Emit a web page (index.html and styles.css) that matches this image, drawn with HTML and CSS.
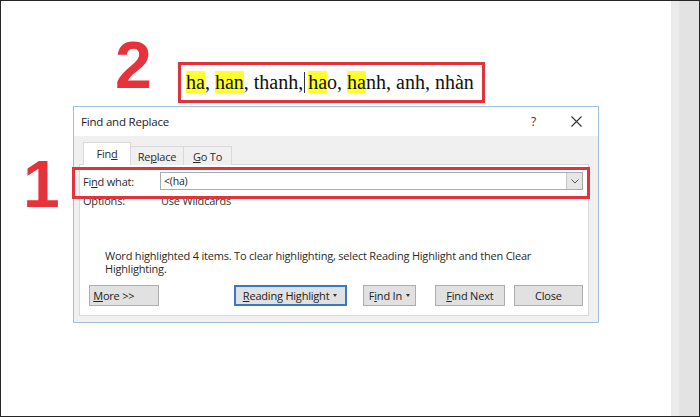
FILE: index.html
```html
<!DOCTYPE html>
<html>
<head>
<meta charset="utf-8">
<link rel="stylesheet" href="styles.css">
</head>
<body>
<div class="frame">
  <div class="page">
    <div class="doc-row">
      <div class="num num-2">2</div>
      <div class="doc-box">
        <span class="hl">ha</span>, <span class="hl">han</span>, thanh,<span class="caret"> </span><span class="hl">ha</span>o, <span class="hl">ha</span>nh, anh, nhàn
      </div>
    </div>

    <div class="dialog">
      <div class="titlebar">
        <span class="title">Find and Replace</span>
        <span class="help">?</span>
        <svg class="close-x" width="11" height="11" viewBox="0 0 11 11"><path d="M0.5 0.5 L10.5 10.5 M10.5 0.5 L0.5 10.5" stroke="#333" stroke-width="1.1" fill="none"/></svg>
      </div>
      <div class="body">
        <div class="tabs">
          <div class="tab active">Fin<u>d</u></div>
          <div class="tab">Re<u>p</u>lace</div>
          <div class="tab"><u>G</u>o To</div>
        </div>
        <div class="panel">
          <div class="find-row">
            <span class="label">Fi<u>n</u>d what:</span>
            <div class="input">
              <span class="input-text">&lt;(ha)</span>
              <span class="dd">
                <svg width="8" height="5" viewBox="0 0 8 5"><path d="M0.5 0.5 L4 4 L7.5 0.5" stroke="#555" stroke-width="1" fill="none"/></svg>
              </span>
            </div>
          </div>
          <div class="options-row">
            <span class="label">Options:</span>
            <span class="opt-val">Use Wildcards</span>
          </div>
          <div class="spacer"></div>
          <div class="message">Word highlighted 4 items. To clear highlighting, select Reading Highlight and then Clear<br>Highlighting.</div>
          <div class="buttons">
            <div class="btn btn-more"><u>M</u>ore &gt;&gt;</div>
            <div class="btn btn-reading focused"><u>R</u>eading Highlight<span class="tri"></span></div>
            <div class="btn btn-findin">F<u>i</u>nd In<span class="tri"></span></div>
            <div class="btn btn-next"><u>F</u>ind Next</div>
            <div class="btn btn-close">Close</div>
          </div>
        </div>
      </div>
    </div>

    <div class="num num-1">1</div>
    <div class="find-mark"></div>
  </div>
  <div class="strip"></div>
</div>
</body>
</html>
```

FILE: styles.css
```css
* { box-sizing: border-box; }
html, body { margin: 0; padding: 0; background: #fff; }
.frame {
  width: 700px;
  height: 417px;
  border: 1px solid #262626;
  display: flex;
  overflow: hidden;
}
.page {
  flex: 1;
  position: relative;
  background: #fff;
}
.strip {
  width: 28px;
  background: #e3e3e3;
  border-left: 8px solid #ebebeb;
}

.doc-row {
  display: flex;
  align-items: flex-start;
  margin-left: 114px;
  padding-top: 31px;
}
.num {
  font-family: "Liberation Sans", Arial, sans-serif;
  font-weight: bold;
  font-size: 66px;
  line-height: 1;
  color: #e5323b;
}
.num-2 { width: 37px; }
.doc-box {
  margin-top: 30px;
  margin-left: 26px;
  width: 307px;
  height: 41px;
  border: 3px solid #e0333b;
  padding-left: 5px;
  font-family: "Liberation Serif", "Times New Roman", serif;
  font-size: 20px;
  line-height: 35px;
  color: #111;
  white-space: nowrap;
}
.hl { background: #ffff2e; }
.caret { position: relative; }
.caret::after {
  content: "";
  position: absolute;
  left: 1px;
  top: 1px;
  width: 1px;
  height: 21px;
  background: #333;
}

.dialog {
  margin-left: 72px;
  margin-top: 3px;
  width: 526px;
  height: 217px;
  border: 1px solid #9dc0dd;
  background: #f0f0f0;
  font-family: "Open Sans", "Noto Sans", sans-serif;
  font-size: 11px;
  letter-spacing: -0.2px;
  color: #2a2a2a;
  display: flex;
  flex-direction: column;
}
.titlebar {
  height: 29px;
  background: #fff;
  display: flex;
  align-items: center;
  padding-left: 7px;
}
.title { flex: 1; font-size: 11.5px; color: #222; }
.help { font-size: 12px; margin-right: 35px; color: #333; }
.close-x { margin-right: 16px; }

.body {
  flex: 1;
  padding: 7px 9px 6px 5px;
  display: flex;
  flex-direction: column;
}
.tabs {
  display: flex;
  align-items: flex-end;
  margin-left: 4px;
  height: 22px;
  position: relative;
  z-index: 1;
  margin-bottom: -1px;
}
.tab {
  height: 19px;
  padding: 0;
  border: 1px solid #d9d9d9;
  border-bottom: none;
  background: #f0f0f0;
  display: flex;
  align-items: center;
  justify-content: center;
  white-space: nowrap;
  color: #2a2a2a;
}
.tab + .tab { border-left: none; }
.tab.active {
  height: 23px;
  width: 48px;
  background: #fff;
  padding-bottom: 2px;
}
.tab:nth-child(2) { width: 53px; }
.tab:nth-child(3) { width: 48px; }

.panel {
  flex: 1;
  background: #fff;
  border: 1px solid #d9d9d9;
  display: flex;
  flex-direction: column;
  padding: 7px 5px 9px 1px;
}
.find-row {
  display: flex;
  align-items: center;
  height: 18px;
}
.label { width: 79px; padding-left: 2px; }
.input {
  flex: 1;
  height: 18px;
  border: 1px solid #ababab;
  display: flex;
  align-items: center;
  justify-content: space-between;
  padding: 0 0 0 3px;
  background: #fff;
}
.input-text { font-size: 10.5px; color: #222; }
.dd {
  width: 16px;
  height: 16px;
  background: #e6e6e6;
  border-left: 1px solid #c8c8c8;
  display: flex;
  align-items: center;
  justify-content: center;
}
.options-row {
  display: flex;
  height: 17px;
  align-items: center;
  margin-top: 2px;
  color: #333;
}
.opt-val { padding-left: 1px; }
.spacer { flex: 1; }
.message {
  padding-left: 24px;
  line-height: 12.5px;
  margin-bottom: 10px;
}
.buttons {
  display: flex;
  height: 21px;
  padding-left: 8px;
}
.btn {
  height: 21px;
  background: #e1e1e1;
  border: 1px solid #adadad;
  display: flex;
  align-items: center;
  justify-content: center;
  color: #222;
}
.btn-more { width: 70px; padding-right: 20px; }
.btn-reading { width: 114px; margin-left: 75px; }
.btn-findin { width: 54px; margin-left: 16px; }
.btn-next { width: 70px; margin-left: 19px; }
.btn-close { width: 70px; margin-left: 9px; }
.focused { border: 2px solid #3a78c4; }
.tri {
  width: 0;
  height: 0;
  border-left: 2.5px solid transparent;
  border-right: 2.5px solid transparent;
  border-top: 3px solid #333;
  margin-left: 4px;
}

.num-1 {
  position: absolute;
  left: 22px;
  top: 150px;
}
.find-mark {
  position: absolute;
  left: 71px;
  top: 166px;
  width: 518px;
  height: 32px;
  border: 3px solid #e0333b;
}
```
